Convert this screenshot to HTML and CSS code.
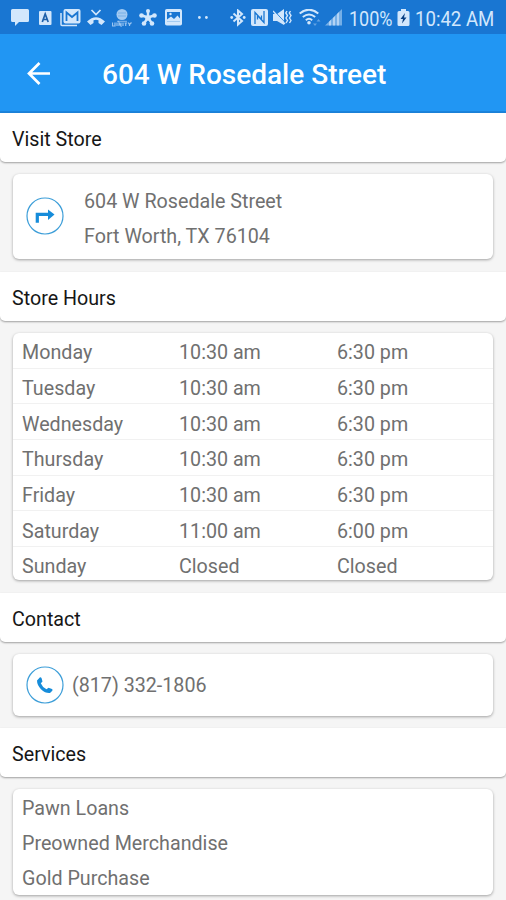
FILE: index.html
```html
<!DOCTYPE html>
<html lang="en">
<head>
<meta charset="utf-8">
<title>604 W Rosedale Street</title>
<link rel="stylesheet" href="styles.css">
</head>
<body>
<div class="status">
  <div class="notifications">
    <svg class="chat" width="18" height="18" viewBox="0 0 18 18"><path fill="currentColor" d="M1.500 0H16.500Q18 0 18 1.500V11.500Q18 13 16.500 13H8L4 17V13H1.500Q0 13 0 11.500V1.500Q0 0 1.500 0Z"/></svg>
    <svg class="letter" width="13" height="18" viewBox="0 0 13 18"><rect y="2" width="12.500" height="14" rx="1" fill="currentColor"/><path d="M3.300 13L6.200 5L9.200 13M4.500 10.500H8" fill="none" stroke="#1d60aa" stroke-width="1.700"/></svg>
    <svg class="mail" width="21" height="18" viewBox="0 0 21 18"><path d="M1 4V15.500Q1 16.500 2 16.500H17" fill="none" stroke="currentColor" stroke-width="1.500"/><rect x="3.500" y="0" width="17" height="14.500" rx="2" fill="currentColor"/><path d="M6.500 12V3.500L12 8L17.500 3.500V12" fill="none" stroke="#1976d2" stroke-width="1.800"/></svg>
    <svg class="missed" width="18" height="18" viewBox="0 0 18 18"><path d="M4.500 1L9 5.500L13.500 1" fill="none" stroke="currentColor" stroke-width="1.700"/><path d="M0 12.500Q9 4 18 12.500L14.500 16L11.500 14V11.200Q9 10.500 6.500 11.200V14L3.500 16Z" fill="currentColor"/></svg>
    <svg class="globe" width="20" height="18" viewBox="0 0 20 18"><circle cx="10" cy="5.500" r="5.500" fill="currentColor" opacity=".75"/><path d="M6 4H14M6 7H14" stroke="#6ca9e4" stroke-width=".8"/><path d="M5 12.300H15" stroke="currentColor" opacity=".6"/><path d="M.5 13.500V17H3V13.500M5 13.500V17M7 17V13.500L9 17V13.500M11 13.500V17M12.500 14H15M13.700 14V17M16 13.500L17.500 15.500L19.500 13.500M17.500 15.500V17" fill="none" stroke="currentColor" stroke-width="1.200" opacity=".7"/></svg>
    <svg class="fan" width="18" height="18" viewBox="0 0 18 18"><g fill="none" stroke="currentColor" stroke-width="2.400"><path d="M9 8.500V3M9 8.500L3 6.500M9 8.500L15 6.500M9 8.500L5 14.500M9 8.500L13 14.500"/></g><g fill="currentColor"><circle cx="9" cy="2" r="2"/><circle cx="2.500" cy="6.500" r="2.300"/><circle cx="15.500" cy="6.500" r="2.300"/><circle cx="5" cy="14.500" r="2.300"/><circle cx="13" cy="14.500" r="2.300"/><circle cx="9" cy="9" r="2.800"/></g></svg>
    <svg class="photo" width="17" height="18" viewBox="0 0 17 18"><rect y="0" width="17" height="16.500" rx="1.800" fill="currentColor"/><path d="M2 12.500V3H15V12.500Z" fill="#1976d2"/><path d="M2 12.500V10.500L6 7.500L9 10L12.500 6.500L15 9.500V12.500Z" fill="currentColor"/><circle cx="5.500" cy="5" r="1.200" fill="currentColor"/></svg>
    <svg class="more" width="10" height="18" viewBox="0 0 10 18"><g fill="currentColor"><circle cx="1.400" cy="8.500" r="1.400"/><circle cx="8.400" cy="8.500" r="1.400"/></g></svg>
  </div>
  <div class="system">
    <svg class="bluetooth" width="16" height="18" viewBox="0 0 16 18"><path d="M3.500 4.500L12 12L8 15.500V1.500L12 5L3.500 12.500" fill="none" stroke="currentColor" stroke-width="2"/><g fill="currentColor"><circle cx="1.700" cy="8.500" r="1.400"/><circle cx="14.200" cy="8.500" r="1.400"/></g></svg>
    <svg class="nfc" width="17" height="18" viewBox="0 0 17 18"><rect width="17" height="17" rx="2" fill="currentColor"/><path d="M4 15V3.500L10.500 10.500V6.500M13 2V13.500L6.500 6.500V10.500" fill="none" stroke="#1976d2" stroke-width="1.300"/></svg>
    <svg class="mute" width="19" height="18" viewBox="0 0 19 18"><path d="M0 5H4L11 0V16L4 12H0Z" fill="currentColor"/><path d="M1 1.500L12.500 14" stroke="#1976d2" stroke-width="1"/><path d="M0 2L12 15" stroke="currentColor" stroke-width="1.300"/><path d="M14 2L12.800 4L14.500 6.500L13 9L14.500 11.500L13 14M17.500 2L16.300 4L18 6.500L16.500 9L18 11.500L16.500 14" fill="none" stroke="currentColor" stroke-width="1.400"/></svg>
    <svg class="wifi" width="22" height="18" viewBox="0 0 22 18"><g fill="none" stroke="currentColor" stroke-width="1.900"><path d="M.7 4.500Q10 -3.200 19.300 4.500M3.800 8Q10 2.800 16.200 8M6.800 11.200Q10 8.400 13.200 11.200"/></g><circle cx="10" cy="13.800" r="1.800" fill="currentColor"/><path d="M14 14.500L16 17L18 14.500ZM17.500 12.500L19.500 10L21.500 12.500Z" fill="currentColor" opacity=".4"/></svg>
    <svg class="signal" width="17" height="18" viewBox="0 0 17 18"><path d="M0 16.500L17 0V16.500Z" fill="currentColor" opacity=".5"/><path d="M4 16.500V12.700L6 10.800V16.500ZM8 16.500V9L10 7V16.500ZM12 16.500V5L14 3V16.500Z" fill="currentColor" opacity=".65"/></svg>
    <span class="percent">100%</span>
    <svg class="battery" width="13" height="18" viewBox="0 0 13 18"><path d="M4 0H9V2H11Q12.500 2 12.500 3.500V15.500Q12.500 17 11 17H2Q.5 17 .5 15.500V3.500Q.5 2 2 2H4Z" fill="currentColor"/><path d="M8 4L3.500 10H6L5 14.500L9.500 8.500H7Z" fill="#073f83"/></svg>
    <span class="clock">10:42 AM</span>
  </div>
</div>
<header class="appbar">
  <svg class="back" width="24" height="24" viewBox="0 0 24 24"><path d="M23 11.500H2M12.500 1L2 11.500L12.500 22" fill="none" stroke="currentColor" stroke-width="2.700"/></svg>
  <h1>604 W Rosedale Street</h1>
</header>
<main>
  <h2 class="first">Visit Store</h2>
  <section class="card address">
    <svg class="round" width="38" height="38" viewBox="0 0 38 38"><circle cx="19" cy="19" r="18" fill="none" stroke="#3d9ed8" stroke-width="1.200"/><path d="M11.300 25.700V17.300H23" fill="none" stroke="#168cda" stroke-width="3.200"/><path d="M22 12.500L28.500 17.600L22 23Z" fill="#168cda"/></svg>
    <div class="lines"><div>604 W Rosedale Street</div><div class="city">Fort Worth, TX 76104</div></div>
  </section>
  <h2>Store Hours</h2>
  <section class="card hours">
    <div class="row"><span>Monday</span><span>10:30 am</span><span>6:30 pm</span></div>
    <div class="row"><span>Tuesday</span><span>10:30 am</span><span>6:30 pm</span></div>
    <div class="row"><span>Wednesday</span><span>10:30 am</span><span>6:30 pm</span></div>
    <div class="row"><span>Thursday</span><span>10:30 am</span><span>6:30 pm</span></div>
    <div class="row"><span>Friday</span><span>10:30 am</span><span>6:30 pm</span></div>
    <div class="row"><span>Saturday</span><span>11:00 am</span><span>6:00 pm</span></div>
    <div class="row"><span>Sunday</span><span>Closed</span><span>Closed</span></div>
  </section>
  <h2>Contact</h2>
  <section class="card contact">
    <svg class="round" width="38" height="38" viewBox="0 0 38 38"><circle cx="19" cy="19" r="18" fill="none" stroke="#3d9ed8" stroke-width="1.200"/><path d="M11 14.500L14 11.200Q15 11 15.500 12L16.500 15.500L14.800 17.300Q16.500 21.500 20.500 23.300L22.500 21.700L26 23Q27 23.700 26.300 24.700L24 27Q19.500 27.500 15 23.200Q11 19 11 14.500Z" fill="#168cda"/></svg>
    <span class="phone">(817) 332-1806</span>
  </section>
  <h2>Services</h2>
  <section class="card services">
    <div>Pawn Loans</div><div>Preowned Merchandise</div><div>Gold Purchase</div>
  </section>
</main>
</body>
</html>
```

FILE: styles.css
```css
* { box-sizing: border-box; }
html, body { margin: 0; }
body {
  height: 900px;
  overflow: hidden;
  background: #f5f5f5;
  color: #707070;
  font: 19.7px/24px Roboto, sans-serif;
}
.status {
  height: 34px;
  background: #1976d2;
  color: #d2e7fc;
  display: flex;
  justify-content: space-between;
  padding: 0 12px 0 11px;
}
.status svg { display: block; flex: none; }
.notifications, .system { display: flex; padding-top: 9px; height: 34px; }
.letter { margin-left: 10px; }
.mail { margin-left: 8px; }
.missed { margin-left: 6px; }
.globe { margin-left: 7px; }
.fan { margin-left: 7px; }
.photo { margin-left: 8px; }
.more { margin-left: 16px; }
.nfc { margin-left: 5px; }
.mute { margin-left: 5px; }
.wifi { margin-left: 7px; }
.signal { margin-left: 4px; }
.percent, .clock {
  font-size: 20px;
  line-height: 20px;
  white-space: nowrap;
  transform-origin: 0 50%;
}
.percent { width: 44px; margin-left: 7px; transform: scaleX(.9); }
.battery { margin-left: 4px; }
.clock { width: 79px; margin-left: 5px; transform: scaleX(.93); }
.appbar {
  height: 79px;
  background: #2196f3;
  border-bottom: 2px solid #1b83db;
  color: #fff;
  display: flex;
  align-items: center;
  padding: 3px 0 0 27px;
}
h1 { margin: 2px 0 0 51px; font-size: 28px; line-height: 32px; font-weight: 500; white-space: nowrap; }
h2 {
  height: 49px;
  margin: 13px 0 12px;
  padding: 15px 12px 0;
  background: #fff;
  color: #161616;
  border-radius: 0 0 5px 5px;
  box-shadow: 0 1px 2px rgba(0, 0, 0, .35);
  font-size: 19.7px;
  line-height: 24px;
  font-weight: 400;
}
.first { margin-top: 0; }
.card {
  margin: 0 13px;
  background: #fff;
  border-radius: 6px;
  box-shadow: 0 1px 3px rgba(0, 0, 0, .35);
}
.address, .contact { display: flex; padding-left: 13px; }
.address { height: 85px; padding-top: 16px; }
.address .round { margin-top: 7px; }
.lines { margin-left: 20px; }
.city { margin-top: 11px; }
.hours { height: 247px; overflow: hidden; }
.row {
  height: 35.667px;
  padding: 8.3px 0 0 9px;
  display: grid;
  grid-template-columns: 157px 158px 1fr;
  border-bottom: 1px solid #f1f1f1;
}
.row:last-child { border-bottom: 0; }
.contact { height: 62px; align-items: center; }
.contact + h2 { margin-top: 12px; }
.phone { margin: 2px 0 0 8px; }
.services { height: 106px; padding: 8px 9px; }
.services div { height: 35.2px; }
```
